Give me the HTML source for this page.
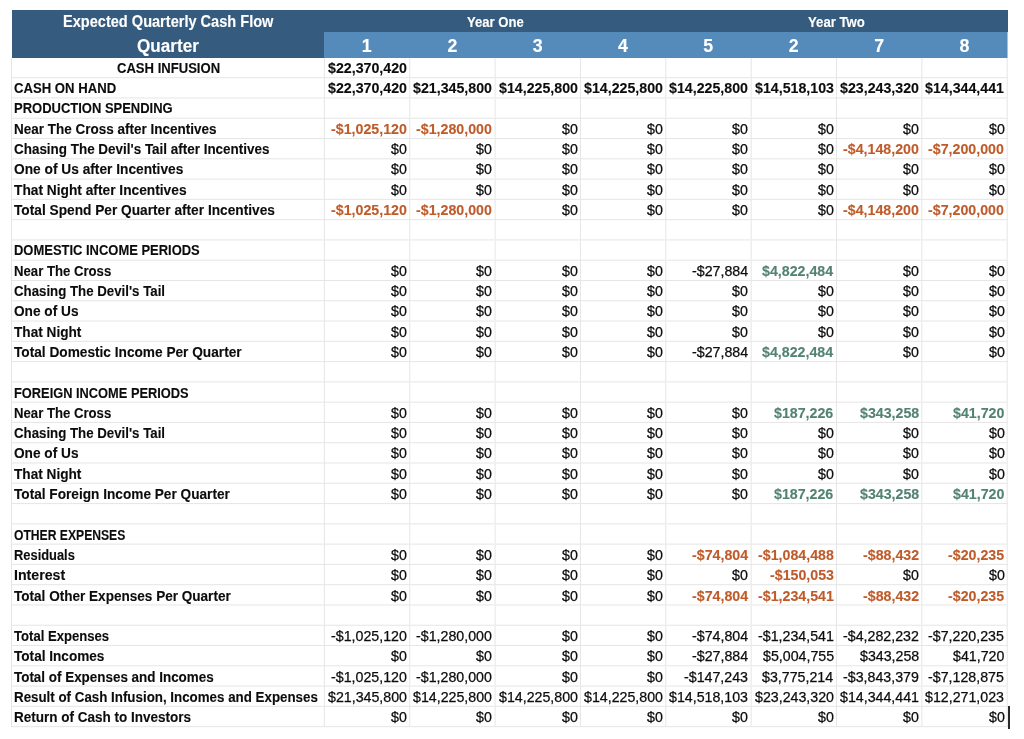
<!DOCTYPE html><html><head><meta charset="utf-8"><style>
html,body{margin:0;padding:0;background:#fff;width:1024px;height:739px;overflow:hidden;position:relative}
.t{position:absolute;font-family:"Liberation Sans",sans-serif;white-space:pre;line-height:40px;height:40px}
.g{position:absolute;mix-blend-mode:darken}
</style></head><body>

<div class="g" style="left:11px;top:77px;width:997px;height:1px;background:rgb(234,234,234)"></div>
<div class="g" style="left:11px;top:78px;width:997px;height:1px;background:rgb(250,250,250)"></div>
<div class="g" style="left:11px;top:97px;width:997px;height:1px;background:rgb(241,241,241)"></div>
<div class="g" style="left:11px;top:98px;width:997px;height:1px;background:rgb(243,243,243)"></div>
<div class="g" style="left:11px;top:117px;width:997px;height:1px;background:rgb(248,248,248)"></div>
<div class="g" style="left:11px;top:118px;width:997px;height:1px;background:rgb(236,236,236)"></div>
<div class="g" style="left:11px;top:138px;width:997px;height:1px;background:rgb(230,230,230)"></div>
<div class="g" style="left:11px;top:158px;width:997px;height:1px;background:rgb(237,237,237)"></div>
<div class="g" style="left:11px;top:159px;width:997px;height:1px;background:rgb(247,247,247)"></div>
<div class="g" style="left:11px;top:178px;width:997px;height:1px;background:rgb(244,244,244)"></div>
<div class="g" style="left:11px;top:179px;width:997px;height:1px;background:rgb(240,240,240)"></div>
<div class="g" style="left:11px;top:198px;width:997px;height:1px;background:rgb(251,251,251)"></div>
<div class="g" style="left:11px;top:199px;width:997px;height:1px;background:rgb(233,233,233)"></div>
<div class="g" style="left:11px;top:219px;width:997px;height:1px;background:rgb(233,233,233)"></div>
<div class="g" style="left:11px;top:220px;width:997px;height:1px;background:rgb(251,251,251)"></div>
<div class="g" style="left:11px;top:239px;width:997px;height:1px;background:rgb(240,240,240)"></div>
<div class="g" style="left:11px;top:240px;width:997px;height:1px;background:rgb(244,244,244)"></div>
<div class="g" style="left:11px;top:259px;width:997px;height:1px;background:rgb(247,247,247)"></div>
<div class="g" style="left:11px;top:260px;width:997px;height:1px;background:rgb(237,237,237)"></div>
<div class="g" style="left:11px;top:280px;width:997px;height:1px;background:rgb(230,230,230)"></div>
<div class="g" style="left:11px;top:300px;width:997px;height:1px;background:rgb(236,236,236)"></div>
<div class="g" style="left:11px;top:301px;width:997px;height:1px;background:rgb(248,248,248)"></div>
<div class="g" style="left:11px;top:320px;width:997px;height:1px;background:rgb(243,243,243)"></div>
<div class="g" style="left:11px;top:321px;width:997px;height:1px;background:rgb(241,241,241)"></div>
<div class="g" style="left:11px;top:340px;width:997px;height:1px;background:rgb(250,250,250)"></div>
<div class="g" style="left:11px;top:341px;width:997px;height:1px;background:rgb(234,234,234)"></div>
<div class="g" style="left:11px;top:361px;width:997px;height:1px;background:rgb(232,232,232)"></div>
<div class="g" style="left:11px;top:362px;width:997px;height:1px;background:rgb(252,252,252)"></div>
<div class="g" style="left:11px;top:381px;width:997px;height:1px;background:rgb(239,239,239)"></div>
<div class="g" style="left:11px;top:382px;width:997px;height:1px;background:rgb(245,245,245)"></div>
<div class="g" style="left:11px;top:401px;width:997px;height:1px;background:rgb(246,246,246)"></div>
<div class="g" style="left:11px;top:402px;width:997px;height:1px;background:rgb(238,238,238)"></div>
<div class="g" style="left:11px;top:421px;width:997px;height:1px;background:rgb(253,253,253)"></div>
<div class="g" style="left:11px;top:422px;width:997px;height:1px;background:rgb(231,231,231)"></div>
<div class="g" style="left:11px;top:442px;width:997px;height:1px;background:rgb(235,235,235)"></div>
<div class="g" style="left:11px;top:443px;width:997px;height:1px;background:rgb(249,249,249)"></div>
<div class="g" style="left:11px;top:462px;width:997px;height:1px;background:rgb(242,242,242)"></div>
<div class="g" style="left:11px;top:463px;width:997px;height:1px;background:rgb(242,242,242)"></div>
<div class="g" style="left:11px;top:482px;width:997px;height:1px;background:rgb(249,249,249)"></div>
<div class="g" style="left:11px;top:483px;width:997px;height:1px;background:rgb(235,235,235)"></div>
<div class="g" style="left:11px;top:503px;width:997px;height:1px;background:rgb(231,231,231)"></div>
<div class="g" style="left:11px;top:504px;width:997px;height:1px;background:rgb(253,253,253)"></div>
<div class="g" style="left:11px;top:523px;width:997px;height:1px;background:rgb(238,238,238)"></div>
<div class="g" style="left:11px;top:524px;width:997px;height:1px;background:rgb(246,246,246)"></div>
<div class="g" style="left:11px;top:543px;width:997px;height:1px;background:rgb(245,245,245)"></div>
<div class="g" style="left:11px;top:544px;width:997px;height:1px;background:rgb(239,239,239)"></div>
<div class="g" style="left:11px;top:563px;width:997px;height:1px;background:rgb(252,252,252)"></div>
<div class="g" style="left:11px;top:564px;width:997px;height:1px;background:rgb(232,232,232)"></div>
<div class="g" style="left:11px;top:584px;width:997px;height:1px;background:rgb(234,234,234)"></div>
<div class="g" style="left:11px;top:585px;width:997px;height:1px;background:rgb(250,250,250)"></div>
<div class="g" style="left:11px;top:604px;width:997px;height:1px;background:rgb(241,241,241)"></div>
<div class="g" style="left:11px;top:605px;width:997px;height:1px;background:rgb(243,243,243)"></div>
<div class="g" style="left:11px;top:624px;width:997px;height:1px;background:rgb(248,248,248)"></div>
<div class="g" style="left:11px;top:625px;width:997px;height:1px;background:rgb(236,236,236)"></div>
<div class="g" style="left:11px;top:645px;width:997px;height:1px;background:rgb(230,230,230)"></div>
<div class="g" style="left:11px;top:665px;width:997px;height:1px;background:rgb(237,237,237)"></div>
<div class="g" style="left:11px;top:666px;width:997px;height:1px;background:rgb(247,247,247)"></div>
<div class="g" style="left:11px;top:685px;width:997px;height:1px;background:rgb(244,244,244)"></div>
<div class="g" style="left:11px;top:686px;width:997px;height:1px;background:rgb(240,240,240)"></div>
<div class="g" style="left:11px;top:705px;width:997px;height:1px;background:rgb(251,251,251)"></div>
<div class="g" style="left:11px;top:706px;width:997px;height:1px;background:rgb(233,233,233)"></div>
<div class="g" style="left:11px;top:726px;width:997px;height:1px;background:rgb(233,233,233)"></div>
<div class="g" style="left:11px;top:727px;width:997px;height:1px;background:rgb(251,251,251)"></div>
<div class="g" style="left:11px;top:58px;width:1px;height:669px;background:rgb(230,230,230)"></div>
<div class="g" style="left:323px;top:58px;width:1px;height:669px;background:rgb(252,252,252)"></div>
<div class="g" style="left:324px;top:58px;width:1px;height:669px;background:rgb(232,232,232)"></div>
<div class="g" style="left:409px;top:58px;width:1px;height:669px;background:rgb(236,236,236)"></div>
<div class="g" style="left:410px;top:58px;width:1px;height:669px;background:rgb(249,249,249)"></div>
<div class="g" style="left:494px;top:58px;width:1px;height:669px;background:rgb(245,245,245)"></div>
<div class="g" style="left:495px;top:58px;width:1px;height:669px;background:rgb(240,240,240)"></div>
<div class="g" style="left:579px;top:58px;width:1px;height:669px;background:rgb(254,254,254)"></div>
<div class="g" style="left:580px;top:58px;width:1px;height:669px;background:rgb(231,231,231)"></div>
<div class="g" style="left:665px;top:58px;width:1px;height:669px;background:rgb(237,237,237)"></div>
<div class="g" style="left:666px;top:58px;width:1px;height:669px;background:rgb(247,247,247)"></div>
<div class="g" style="left:750px;top:58px;width:1px;height:669px;background:rgb(246,246,246)"></div>
<div class="g" style="left:751px;top:58px;width:1px;height:669px;background:rgb(238,238,238)"></div>
<div class="g" style="left:836px;top:58px;width:1px;height:669px;background:rgb(230,230,230)"></div>
<div class="g" style="left:921px;top:58px;width:1px;height:669px;background:rgb(238,238,238)"></div>
<div class="g" style="left:922px;top:58px;width:1px;height:669px;background:rgb(246,246,246)"></div>
<div class="g" style="left:1006px;top:58px;width:1px;height:669px;background:rgb(247,247,247)"></div>
<div class="g" style="left:1007px;top:58px;width:1px;height:669px;background:rgb(237,237,237)"></div>
<div style="position:absolute;left:12px;top:10px;width:996px;height:48px;background:#355C7F"></div>
<div style="position:absolute;left:324px;top:32px;width:684px;height:26px;background:#548BBA"></div>
<div style="position:absolute;left:1008px;top:706px;width:2px;height:23px;background:#2a2a2a"></div>
<div style="position:absolute;left:1007px;top:32px;width:1px;height:26px;background:#9cc3e3"></div>
<div class="t" style="left:116.51px;top:47.70px;font-weight:700;font-size:14px;color:#0c0c0c;transform:scaleX(0.9332);transform-origin:left center;-webkit-text-stroke:0.12px #0c0c0c">CASH INFUSION</div>
<div class="t" style="left:13.81px;top:68.00px;font-weight:700;font-size:14px;color:#0c0c0c;transform:scaleX(0.9378);transform-origin:left center;-webkit-text-stroke:0.12px #0c0c0c">CASH ON HAND</div>
<div class="t" style="left:14.01px;top:88.30px;font-weight:700;font-size:14px;color:#0c0c0c;transform:scaleX(0.9274);transform-origin:left center;-webkit-text-stroke:0.12px #0c0c0c">PRODUCTION SPENDING</div>
<div class="t" style="left:13.98px;top:108.60px;font-weight:700;font-size:14px;color:#0c0c0c;transform:scaleX(0.9638);transform-origin:left center;-webkit-text-stroke:0.12px #0c0c0c">Near The Cross after Incentives</div>
<div class="t" style="left:13.79px;top:128.90px;font-weight:700;font-size:14px;color:#0c0c0c;transform:scaleX(0.9599);transform-origin:left center;-webkit-text-stroke:0.12px #0c0c0c">Chasing The Devil&#x27;s Tail after Incentives</div>
<div class="t" style="left:13.73px;top:149.20px;font-weight:700;font-size:14px;color:#0c0c0c;transform:scaleX(0.9803);transform-origin:left center;-webkit-text-stroke:0.12px #0c0c0c">One of Us after Incentives</div>
<div class="t" style="left:14.16px;top:169.50px;font-weight:700;font-size:14px;color:#0c0c0c;transform:scaleX(0.9813);transform-origin:left center;-webkit-text-stroke:0.12px #0c0c0c">That Night after Incentives</div>
<div class="t" style="left:14.16px;top:189.80px;font-weight:700;font-size:14px;color:#0c0c0c;transform:scaleX(0.9786);transform-origin:left center;-webkit-text-stroke:0.12px #0c0c0c">Total Spend Per Quarter after Incentives</div>
<div class="t" style="left:14.01px;top:230.40px;font-weight:700;font-size:14px;color:#0c0c0c;transform:scaleX(0.9256);transform-origin:left center;-webkit-text-stroke:0.12px #0c0c0c">DOMESTIC INCOME PERIODS</div>
<div class="t" style="left:14.00px;top:250.70px;font-weight:700;font-size:14px;color:#0c0c0c;transform:scaleX(0.9395);transform-origin:left center;-webkit-text-stroke:0.12px #0c0c0c">Near The Cross</div>
<div class="t" style="left:13.80px;top:271.00px;font-weight:700;font-size:14px;color:#0c0c0c;transform:scaleX(0.9471);transform-origin:left center;-webkit-text-stroke:0.12px #0c0c0c">Chasing The Devil&#x27;s Tail</div>
<div class="t" style="left:13.73px;top:291.30px;font-weight:700;font-size:14px;color:#0c0c0c;transform:scaleX(0.9756);transform-origin:left center;-webkit-text-stroke:0.12px #0c0c0c">One of Us</div>
<div class="t" style="left:14.16px;top:311.60px;font-weight:700;font-size:14px;color:#0c0c0c;transform:scaleX(0.9739);transform-origin:left center;-webkit-text-stroke:0.12px #0c0c0c">That Night</div>
<div class="t" style="left:14.16px;top:331.90px;font-weight:700;font-size:14px;color:#0c0c0c;transform:scaleX(0.9763);transform-origin:left center;-webkit-text-stroke:0.12px #0c0c0c">Total Domestic Income Per Quarter</div>
<div class="t" style="left:14.02px;top:372.50px;font-weight:700;font-size:14px;color:#0c0c0c;transform:scaleX(0.9164);transform-origin:left center;-webkit-text-stroke:0.12px #0c0c0c">FOREIGN INCOME PERIODS</div>
<div class="t" style="left:14.00px;top:392.80px;font-weight:700;font-size:14px;color:#0c0c0c;transform:scaleX(0.9395);transform-origin:left center;-webkit-text-stroke:0.12px #0c0c0c">Near The Cross</div>
<div class="t" style="left:13.80px;top:413.10px;font-weight:700;font-size:14px;color:#0c0c0c;transform:scaleX(0.9471);transform-origin:left center;-webkit-text-stroke:0.12px #0c0c0c">Chasing The Devil&#x27;s Tail</div>
<div class="t" style="left:13.73px;top:433.40px;font-weight:700;font-size:14px;color:#0c0c0c;transform:scaleX(0.9756);transform-origin:left center;-webkit-text-stroke:0.12px #0c0c0c">One of Us</div>
<div class="t" style="left:14.16px;top:453.70px;font-weight:700;font-size:14px;color:#0c0c0c;transform:scaleX(0.9739);transform-origin:left center;-webkit-text-stroke:0.12px #0c0c0c">That Night</div>
<div class="t" style="left:14.16px;top:474.00px;font-weight:700;font-size:14px;color:#0c0c0c;transform:scaleX(0.9747);transform-origin:left center;-webkit-text-stroke:0.12px #0c0c0c">Total Foreign Income Per Quarter</div>
<div class="t" style="left:13.80px;top:514.60px;font-weight:700;font-size:14px;color:#0c0c0c;transform:scaleX(0.8671);transform-origin:left center;-webkit-text-stroke:0.12px #0c0c0c">OTHER EXPENSES</div>
<div class="t" style="left:14.02px;top:534.90px;font-weight:700;font-size:14px;color:#0c0c0c;transform:scaleX(0.9202);transform-origin:left center;-webkit-text-stroke:0.12px #0c0c0c">Residuals</div>
<div class="t" style="left:13.94px;top:555.20px;font-weight:700;font-size:14px;color:#0c0c0c;transform:scaleX(1.0115);transform-origin:left center;-webkit-text-stroke:0.12px #0c0c0c">Interest</div>
<div class="t" style="left:14.16px;top:575.50px;font-weight:700;font-size:14px;color:#0c0c0c;transform:scaleX(0.9683);transform-origin:left center;-webkit-text-stroke:0.12px #0c0c0c">Total Other Expenses Per Quarter</div>
<div class="t" style="left:14.16px;top:616.10px;font-weight:700;font-size:14px;color:#0c0c0c;transform:scaleX(0.9360);transform-origin:left center;-webkit-text-stroke:0.12px #0c0c0c">Total Expenses</div>
<div class="t" style="left:14.16px;top:636.40px;font-weight:700;font-size:14px;color:#0c0c0c;transform:scaleX(0.9711);transform-origin:left center;-webkit-text-stroke:0.12px #0c0c0c">Total Incomes</div>
<div class="t" style="left:14.16px;top:656.70px;font-weight:700;font-size:14px;color:#0c0c0c;transform:scaleX(0.9588);transform-origin:left center;-webkit-text-stroke:0.12px #0c0c0c">Total of Expenses and Incomes</div>
<div class="t" style="left:13.99px;top:677.00px;font-weight:700;font-size:14px;color:#0c0c0c;transform:scaleX(0.9526);transform-origin:left center;-webkit-text-stroke:0.12px #0c0c0c">Result of Cash Infusion, Incomes and Expenses</div>
<div class="t" style="left:13.98px;top:697.30px;font-weight:700;font-size:14px;color:#0c0c0c;transform:scaleX(0.9644);transform-origin:left center;-webkit-text-stroke:0.12px #0c0c0c">Return of Cash to Investors</div>
<div class="t" style="left:327.97px;top:47.70px;font-weight:700;font-size:14px;color:#0c0c0c;transform:scaleX(1.0150);transform-origin:left center;-webkit-text-stroke:0.12px #0c0c0c">$22,370,420</div>
<div class="t" style="left:327.97px;top:68.00px;font-weight:700;font-size:14px;color:#0c0c0c;transform:scaleX(1.0150);transform-origin:left center;-webkit-text-stroke:0.12px #0c0c0c">$22,370,420</div>
<div class="t" style="left:413.32px;top:68.00px;font-weight:700;font-size:14px;color:#0c0c0c;transform:scaleX(1.0150);transform-origin:left center;-webkit-text-stroke:0.12px #0c0c0c">$21,345,800</div>
<div class="t" style="left:498.67px;top:68.00px;font-weight:700;font-size:14px;color:#0c0c0c;transform:scaleX(1.0150);transform-origin:left center;-webkit-text-stroke:0.12px #0c0c0c">$14,225,800</div>
<div class="t" style="left:584.02px;top:68.00px;font-weight:700;font-size:14px;color:#0c0c0c;transform:scaleX(1.0150);transform-origin:left center;-webkit-text-stroke:0.12px #0c0c0c">$14,225,800</div>
<div class="t" style="left:669.37px;top:68.00px;font-weight:700;font-size:14px;color:#0c0c0c;transform:scaleX(1.0150);transform-origin:left center;-webkit-text-stroke:0.12px #0c0c0c">$14,225,800</div>
<div class="t" style="left:754.71px;top:68.00px;font-weight:700;font-size:14px;color:#0c0c0c;transform:scaleX(1.0150);transform-origin:left center;-webkit-text-stroke:0.12px #0c0c0c">$14,518,103</div>
<div class="t" style="left:840.07px;top:68.00px;font-weight:700;font-size:14px;color:#0c0c0c;transform:scaleX(1.0150);transform-origin:left center;-webkit-text-stroke:0.12px #0c0c0c">$23,243,320</div>
<div class="t" style="left:925.26px;top:68.00px;font-weight:700;font-size:14px;color:#0c0c0c;transform:scaleX(1.0150);transform-origin:left center;-webkit-text-stroke:0.12px #0c0c0c">$14,344,441</div>
<div class="t" style="left:331.01px;top:108.60px;font-weight:700;font-size:14px;color:#BF5B2A;transform:scaleX(1.0150);transform-origin:left center;-webkit-text-stroke:0.12px #BF5B2A">-$1,025,120</div>
<div class="t" style="left:416.36px;top:108.60px;font-weight:700;font-size:14px;color:#BF5B2A;transform:scaleX(1.0150);transform-origin:left center;-webkit-text-stroke:0.12px #BF5B2A">-$1,280,000</div>
<div class="t" style="left:561.77px;top:108.60px;font-weight:400;font-size:14px;color:#0c0c0c;transform:scaleX(1.0150);transform-origin:left center;-webkit-text-stroke:0.25px #0c0c0c">$0</div>
<div class="t" style="left:647.12px;top:108.60px;font-weight:400;font-size:14px;color:#0c0c0c;transform:scaleX(1.0150);transform-origin:left center;-webkit-text-stroke:0.25px #0c0c0c">$0</div>
<div class="t" style="left:732.47px;top:108.60px;font-weight:400;font-size:14px;color:#0c0c0c;transform:scaleX(1.0150);transform-origin:left center;-webkit-text-stroke:0.25px #0c0c0c">$0</div>
<div class="t" style="left:817.82px;top:108.60px;font-weight:400;font-size:14px;color:#0c0c0c;transform:scaleX(1.0150);transform-origin:left center;-webkit-text-stroke:0.25px #0c0c0c">$0</div>
<div class="t" style="left:903.17px;top:108.60px;font-weight:400;font-size:14px;color:#0c0c0c;transform:scaleX(1.0150);transform-origin:left center;-webkit-text-stroke:0.25px #0c0c0c">$0</div>
<div class="t" style="left:988.52px;top:108.60px;font-weight:400;font-size:14px;color:#0c0c0c;transform:scaleX(1.0150);transform-origin:left center;-webkit-text-stroke:0.25px #0c0c0c">$0</div>
<div class="t" style="left:391.07px;top:128.90px;font-weight:400;font-size:14px;color:#0c0c0c;transform:scaleX(1.0150);transform-origin:left center;-webkit-text-stroke:0.25px #0c0c0c">$0</div>
<div class="t" style="left:476.42px;top:128.90px;font-weight:400;font-size:14px;color:#0c0c0c;transform:scaleX(1.0150);transform-origin:left center;-webkit-text-stroke:0.25px #0c0c0c">$0</div>
<div class="t" style="left:561.77px;top:128.90px;font-weight:400;font-size:14px;color:#0c0c0c;transform:scaleX(1.0150);transform-origin:left center;-webkit-text-stroke:0.25px #0c0c0c">$0</div>
<div class="t" style="left:647.12px;top:128.90px;font-weight:400;font-size:14px;color:#0c0c0c;transform:scaleX(1.0150);transform-origin:left center;-webkit-text-stroke:0.25px #0c0c0c">$0</div>
<div class="t" style="left:732.47px;top:128.90px;font-weight:400;font-size:14px;color:#0c0c0c;transform:scaleX(1.0150);transform-origin:left center;-webkit-text-stroke:0.25px #0c0c0c">$0</div>
<div class="t" style="left:817.82px;top:128.90px;font-weight:400;font-size:14px;color:#0c0c0c;transform:scaleX(1.0150);transform-origin:left center;-webkit-text-stroke:0.25px #0c0c0c">$0</div>
<div class="t" style="left:843.11px;top:128.90px;font-weight:700;font-size:14px;color:#BF5B2A;transform:scaleX(1.0150);transform-origin:left center;-webkit-text-stroke:0.12px #BF5B2A">-$4,148,200</div>
<div class="t" style="left:928.46px;top:128.90px;font-weight:700;font-size:14px;color:#BF5B2A;transform:scaleX(1.0150);transform-origin:left center;-webkit-text-stroke:0.12px #BF5B2A">-$7,200,000</div>
<div class="t" style="left:391.07px;top:149.20px;font-weight:400;font-size:14px;color:#0c0c0c;transform:scaleX(1.0150);transform-origin:left center;-webkit-text-stroke:0.25px #0c0c0c">$0</div>
<div class="t" style="left:476.42px;top:149.20px;font-weight:400;font-size:14px;color:#0c0c0c;transform:scaleX(1.0150);transform-origin:left center;-webkit-text-stroke:0.25px #0c0c0c">$0</div>
<div class="t" style="left:561.77px;top:149.20px;font-weight:400;font-size:14px;color:#0c0c0c;transform:scaleX(1.0150);transform-origin:left center;-webkit-text-stroke:0.25px #0c0c0c">$0</div>
<div class="t" style="left:647.12px;top:149.20px;font-weight:400;font-size:14px;color:#0c0c0c;transform:scaleX(1.0150);transform-origin:left center;-webkit-text-stroke:0.25px #0c0c0c">$0</div>
<div class="t" style="left:732.47px;top:149.20px;font-weight:400;font-size:14px;color:#0c0c0c;transform:scaleX(1.0150);transform-origin:left center;-webkit-text-stroke:0.25px #0c0c0c">$0</div>
<div class="t" style="left:817.82px;top:149.20px;font-weight:400;font-size:14px;color:#0c0c0c;transform:scaleX(1.0150);transform-origin:left center;-webkit-text-stroke:0.25px #0c0c0c">$0</div>
<div class="t" style="left:903.17px;top:149.20px;font-weight:400;font-size:14px;color:#0c0c0c;transform:scaleX(1.0150);transform-origin:left center;-webkit-text-stroke:0.25px #0c0c0c">$0</div>
<div class="t" style="left:988.52px;top:149.20px;font-weight:400;font-size:14px;color:#0c0c0c;transform:scaleX(1.0150);transform-origin:left center;-webkit-text-stroke:0.25px #0c0c0c">$0</div>
<div class="t" style="left:391.07px;top:169.50px;font-weight:400;font-size:14px;color:#0c0c0c;transform:scaleX(1.0150);transform-origin:left center;-webkit-text-stroke:0.25px #0c0c0c">$0</div>
<div class="t" style="left:476.42px;top:169.50px;font-weight:400;font-size:14px;color:#0c0c0c;transform:scaleX(1.0150);transform-origin:left center;-webkit-text-stroke:0.25px #0c0c0c">$0</div>
<div class="t" style="left:561.77px;top:169.50px;font-weight:400;font-size:14px;color:#0c0c0c;transform:scaleX(1.0150);transform-origin:left center;-webkit-text-stroke:0.25px #0c0c0c">$0</div>
<div class="t" style="left:647.12px;top:169.50px;font-weight:400;font-size:14px;color:#0c0c0c;transform:scaleX(1.0150);transform-origin:left center;-webkit-text-stroke:0.25px #0c0c0c">$0</div>
<div class="t" style="left:732.47px;top:169.50px;font-weight:400;font-size:14px;color:#0c0c0c;transform:scaleX(1.0150);transform-origin:left center;-webkit-text-stroke:0.25px #0c0c0c">$0</div>
<div class="t" style="left:817.82px;top:169.50px;font-weight:400;font-size:14px;color:#0c0c0c;transform:scaleX(1.0150);transform-origin:left center;-webkit-text-stroke:0.25px #0c0c0c">$0</div>
<div class="t" style="left:903.17px;top:169.50px;font-weight:400;font-size:14px;color:#0c0c0c;transform:scaleX(1.0150);transform-origin:left center;-webkit-text-stroke:0.25px #0c0c0c">$0</div>
<div class="t" style="left:988.52px;top:169.50px;font-weight:400;font-size:14px;color:#0c0c0c;transform:scaleX(1.0150);transform-origin:left center;-webkit-text-stroke:0.25px #0c0c0c">$0</div>
<div class="t" style="left:331.01px;top:189.80px;font-weight:700;font-size:14px;color:#BF5B2A;transform:scaleX(1.0150);transform-origin:left center;-webkit-text-stroke:0.12px #BF5B2A">-$1,025,120</div>
<div class="t" style="left:416.36px;top:189.80px;font-weight:700;font-size:14px;color:#BF5B2A;transform:scaleX(1.0150);transform-origin:left center;-webkit-text-stroke:0.12px #BF5B2A">-$1,280,000</div>
<div class="t" style="left:561.77px;top:189.80px;font-weight:400;font-size:14px;color:#0c0c0c;transform:scaleX(1.0150);transform-origin:left center;-webkit-text-stroke:0.25px #0c0c0c">$0</div>
<div class="t" style="left:647.12px;top:189.80px;font-weight:400;font-size:14px;color:#0c0c0c;transform:scaleX(1.0150);transform-origin:left center;-webkit-text-stroke:0.25px #0c0c0c">$0</div>
<div class="t" style="left:732.47px;top:189.80px;font-weight:400;font-size:14px;color:#0c0c0c;transform:scaleX(1.0150);transform-origin:left center;-webkit-text-stroke:0.25px #0c0c0c">$0</div>
<div class="t" style="left:817.82px;top:189.80px;font-weight:400;font-size:14px;color:#0c0c0c;transform:scaleX(1.0150);transform-origin:left center;-webkit-text-stroke:0.25px #0c0c0c">$0</div>
<div class="t" style="left:843.11px;top:189.80px;font-weight:700;font-size:14px;color:#BF5B2A;transform:scaleX(1.0150);transform-origin:left center;-webkit-text-stroke:0.12px #BF5B2A">-$4,148,200</div>
<div class="t" style="left:928.46px;top:189.80px;font-weight:700;font-size:14px;color:#BF5B2A;transform:scaleX(1.0150);transform-origin:left center;-webkit-text-stroke:0.12px #BF5B2A">-$7,200,000</div>
<div class="t" style="left:391.07px;top:250.70px;font-weight:400;font-size:14px;color:#0c0c0c;transform:scaleX(1.0150);transform-origin:left center;-webkit-text-stroke:0.25px #0c0c0c">$0</div>
<div class="t" style="left:476.42px;top:250.70px;font-weight:400;font-size:14px;color:#0c0c0c;transform:scaleX(1.0150);transform-origin:left center;-webkit-text-stroke:0.25px #0c0c0c">$0</div>
<div class="t" style="left:561.77px;top:250.70px;font-weight:400;font-size:14px;color:#0c0c0c;transform:scaleX(1.0150);transform-origin:left center;-webkit-text-stroke:0.25px #0c0c0c">$0</div>
<div class="t" style="left:647.12px;top:250.70px;font-weight:400;font-size:14px;color:#0c0c0c;transform:scaleX(1.0150);transform-origin:left center;-webkit-text-stroke:0.25px #0c0c0c">$0</div>
<div class="t" style="left:691.91px;top:250.70px;font-weight:400;font-size:14px;color:#0c0c0c;transform:scaleX(1.0150);transform-origin:left center;-webkit-text-stroke:0.25px #0c0c0c">-$27,884</div>
<div class="t" style="left:762.00px;top:250.70px;font-weight:700;font-size:14px;color:#528272;transform:scaleX(1.0150);transform-origin:left center;-webkit-text-stroke:0.12px #528272">$4,822,484</div>
<div class="t" style="left:903.17px;top:250.70px;font-weight:400;font-size:14px;color:#0c0c0c;transform:scaleX(1.0150);transform-origin:left center;-webkit-text-stroke:0.25px #0c0c0c">$0</div>
<div class="t" style="left:988.52px;top:250.70px;font-weight:400;font-size:14px;color:#0c0c0c;transform:scaleX(1.0150);transform-origin:left center;-webkit-text-stroke:0.25px #0c0c0c">$0</div>
<div class="t" style="left:391.07px;top:271.00px;font-weight:400;font-size:14px;color:#0c0c0c;transform:scaleX(1.0150);transform-origin:left center;-webkit-text-stroke:0.25px #0c0c0c">$0</div>
<div class="t" style="left:476.42px;top:271.00px;font-weight:400;font-size:14px;color:#0c0c0c;transform:scaleX(1.0150);transform-origin:left center;-webkit-text-stroke:0.25px #0c0c0c">$0</div>
<div class="t" style="left:561.77px;top:271.00px;font-weight:400;font-size:14px;color:#0c0c0c;transform:scaleX(1.0150);transform-origin:left center;-webkit-text-stroke:0.25px #0c0c0c">$0</div>
<div class="t" style="left:647.12px;top:271.00px;font-weight:400;font-size:14px;color:#0c0c0c;transform:scaleX(1.0150);transform-origin:left center;-webkit-text-stroke:0.25px #0c0c0c">$0</div>
<div class="t" style="left:732.47px;top:271.00px;font-weight:400;font-size:14px;color:#0c0c0c;transform:scaleX(1.0150);transform-origin:left center;-webkit-text-stroke:0.25px #0c0c0c">$0</div>
<div class="t" style="left:817.82px;top:271.00px;font-weight:400;font-size:14px;color:#0c0c0c;transform:scaleX(1.0150);transform-origin:left center;-webkit-text-stroke:0.25px #0c0c0c">$0</div>
<div class="t" style="left:903.17px;top:271.00px;font-weight:400;font-size:14px;color:#0c0c0c;transform:scaleX(1.0150);transform-origin:left center;-webkit-text-stroke:0.25px #0c0c0c">$0</div>
<div class="t" style="left:988.52px;top:271.00px;font-weight:400;font-size:14px;color:#0c0c0c;transform:scaleX(1.0150);transform-origin:left center;-webkit-text-stroke:0.25px #0c0c0c">$0</div>
<div class="t" style="left:391.07px;top:291.30px;font-weight:400;font-size:14px;color:#0c0c0c;transform:scaleX(1.0150);transform-origin:left center;-webkit-text-stroke:0.25px #0c0c0c">$0</div>
<div class="t" style="left:476.42px;top:291.30px;font-weight:400;font-size:14px;color:#0c0c0c;transform:scaleX(1.0150);transform-origin:left center;-webkit-text-stroke:0.25px #0c0c0c">$0</div>
<div class="t" style="left:561.77px;top:291.30px;font-weight:400;font-size:14px;color:#0c0c0c;transform:scaleX(1.0150);transform-origin:left center;-webkit-text-stroke:0.25px #0c0c0c">$0</div>
<div class="t" style="left:647.12px;top:291.30px;font-weight:400;font-size:14px;color:#0c0c0c;transform:scaleX(1.0150);transform-origin:left center;-webkit-text-stroke:0.25px #0c0c0c">$0</div>
<div class="t" style="left:732.47px;top:291.30px;font-weight:400;font-size:14px;color:#0c0c0c;transform:scaleX(1.0150);transform-origin:left center;-webkit-text-stroke:0.25px #0c0c0c">$0</div>
<div class="t" style="left:817.82px;top:291.30px;font-weight:400;font-size:14px;color:#0c0c0c;transform:scaleX(1.0150);transform-origin:left center;-webkit-text-stroke:0.25px #0c0c0c">$0</div>
<div class="t" style="left:903.17px;top:291.30px;font-weight:400;font-size:14px;color:#0c0c0c;transform:scaleX(1.0150);transform-origin:left center;-webkit-text-stroke:0.25px #0c0c0c">$0</div>
<div class="t" style="left:988.52px;top:291.30px;font-weight:400;font-size:14px;color:#0c0c0c;transform:scaleX(1.0150);transform-origin:left center;-webkit-text-stroke:0.25px #0c0c0c">$0</div>
<div class="t" style="left:391.07px;top:311.60px;font-weight:400;font-size:14px;color:#0c0c0c;transform:scaleX(1.0150);transform-origin:left center;-webkit-text-stroke:0.25px #0c0c0c">$0</div>
<div class="t" style="left:476.42px;top:311.60px;font-weight:400;font-size:14px;color:#0c0c0c;transform:scaleX(1.0150);transform-origin:left center;-webkit-text-stroke:0.25px #0c0c0c">$0</div>
<div class="t" style="left:561.77px;top:311.60px;font-weight:400;font-size:14px;color:#0c0c0c;transform:scaleX(1.0150);transform-origin:left center;-webkit-text-stroke:0.25px #0c0c0c">$0</div>
<div class="t" style="left:647.12px;top:311.60px;font-weight:400;font-size:14px;color:#0c0c0c;transform:scaleX(1.0150);transform-origin:left center;-webkit-text-stroke:0.25px #0c0c0c">$0</div>
<div class="t" style="left:732.47px;top:311.60px;font-weight:400;font-size:14px;color:#0c0c0c;transform:scaleX(1.0150);transform-origin:left center;-webkit-text-stroke:0.25px #0c0c0c">$0</div>
<div class="t" style="left:817.82px;top:311.60px;font-weight:400;font-size:14px;color:#0c0c0c;transform:scaleX(1.0150);transform-origin:left center;-webkit-text-stroke:0.25px #0c0c0c">$0</div>
<div class="t" style="left:903.17px;top:311.60px;font-weight:400;font-size:14px;color:#0c0c0c;transform:scaleX(1.0150);transform-origin:left center;-webkit-text-stroke:0.25px #0c0c0c">$0</div>
<div class="t" style="left:988.52px;top:311.60px;font-weight:400;font-size:14px;color:#0c0c0c;transform:scaleX(1.0150);transform-origin:left center;-webkit-text-stroke:0.25px #0c0c0c">$0</div>
<div class="t" style="left:391.07px;top:331.90px;font-weight:400;font-size:14px;color:#0c0c0c;transform:scaleX(1.0150);transform-origin:left center;-webkit-text-stroke:0.25px #0c0c0c">$0</div>
<div class="t" style="left:476.42px;top:331.90px;font-weight:400;font-size:14px;color:#0c0c0c;transform:scaleX(1.0150);transform-origin:left center;-webkit-text-stroke:0.25px #0c0c0c">$0</div>
<div class="t" style="left:561.77px;top:331.90px;font-weight:400;font-size:14px;color:#0c0c0c;transform:scaleX(1.0150);transform-origin:left center;-webkit-text-stroke:0.25px #0c0c0c">$0</div>
<div class="t" style="left:647.12px;top:331.90px;font-weight:400;font-size:14px;color:#0c0c0c;transform:scaleX(1.0150);transform-origin:left center;-webkit-text-stroke:0.25px #0c0c0c">$0</div>
<div class="t" style="left:691.91px;top:331.90px;font-weight:400;font-size:14px;color:#0c0c0c;transform:scaleX(1.0150);transform-origin:left center;-webkit-text-stroke:0.25px #0c0c0c">-$27,884</div>
<div class="t" style="left:762.00px;top:331.90px;font-weight:700;font-size:14px;color:#528272;transform:scaleX(1.0150);transform-origin:left center;-webkit-text-stroke:0.12px #528272">$4,822,484</div>
<div class="t" style="left:903.17px;top:331.90px;font-weight:400;font-size:14px;color:#0c0c0c;transform:scaleX(1.0150);transform-origin:left center;-webkit-text-stroke:0.25px #0c0c0c">$0</div>
<div class="t" style="left:988.52px;top:331.90px;font-weight:400;font-size:14px;color:#0c0c0c;transform:scaleX(1.0150);transform-origin:left center;-webkit-text-stroke:0.25px #0c0c0c">$0</div>
<div class="t" style="left:391.07px;top:392.80px;font-weight:400;font-size:14px;color:#0c0c0c;transform:scaleX(1.0150);transform-origin:left center;-webkit-text-stroke:0.25px #0c0c0c">$0</div>
<div class="t" style="left:476.42px;top:392.80px;font-weight:400;font-size:14px;color:#0c0c0c;transform:scaleX(1.0150);transform-origin:left center;-webkit-text-stroke:0.25px #0c0c0c">$0</div>
<div class="t" style="left:561.77px;top:392.80px;font-weight:400;font-size:14px;color:#0c0c0c;transform:scaleX(1.0150);transform-origin:left center;-webkit-text-stroke:0.25px #0c0c0c">$0</div>
<div class="t" style="left:647.12px;top:392.80px;font-weight:400;font-size:14px;color:#0c0c0c;transform:scaleX(1.0150);transform-origin:left center;-webkit-text-stroke:0.25px #0c0c0c">$0</div>
<div class="t" style="left:732.47px;top:392.80px;font-weight:400;font-size:14px;color:#0c0c0c;transform:scaleX(1.0150);transform-origin:left center;-webkit-text-stroke:0.25px #0c0c0c">$0</div>
<div class="t" style="left:774.26px;top:392.80px;font-weight:700;font-size:14px;color:#528272;transform:scaleX(1.0150);transform-origin:left center;-webkit-text-stroke:0.12px #528272">$187,226</div>
<div class="t" style="left:859.60px;top:392.80px;font-weight:700;font-size:14px;color:#528272;transform:scaleX(1.0150);transform-origin:left center;-webkit-text-stroke:0.12px #528272">$343,258</div>
<div class="t" style="left:953.00px;top:392.80px;font-weight:700;font-size:14px;color:#528272;transform:scaleX(1.0150);transform-origin:left center;-webkit-text-stroke:0.12px #528272">$41,720</div>
<div class="t" style="left:391.07px;top:413.10px;font-weight:400;font-size:14px;color:#0c0c0c;transform:scaleX(1.0150);transform-origin:left center;-webkit-text-stroke:0.25px #0c0c0c">$0</div>
<div class="t" style="left:476.42px;top:413.10px;font-weight:400;font-size:14px;color:#0c0c0c;transform:scaleX(1.0150);transform-origin:left center;-webkit-text-stroke:0.25px #0c0c0c">$0</div>
<div class="t" style="left:561.77px;top:413.10px;font-weight:400;font-size:14px;color:#0c0c0c;transform:scaleX(1.0150);transform-origin:left center;-webkit-text-stroke:0.25px #0c0c0c">$0</div>
<div class="t" style="left:647.12px;top:413.10px;font-weight:400;font-size:14px;color:#0c0c0c;transform:scaleX(1.0150);transform-origin:left center;-webkit-text-stroke:0.25px #0c0c0c">$0</div>
<div class="t" style="left:732.47px;top:413.10px;font-weight:400;font-size:14px;color:#0c0c0c;transform:scaleX(1.0150);transform-origin:left center;-webkit-text-stroke:0.25px #0c0c0c">$0</div>
<div class="t" style="left:817.82px;top:413.10px;font-weight:400;font-size:14px;color:#0c0c0c;transform:scaleX(1.0150);transform-origin:left center;-webkit-text-stroke:0.25px #0c0c0c">$0</div>
<div class="t" style="left:903.17px;top:413.10px;font-weight:400;font-size:14px;color:#0c0c0c;transform:scaleX(1.0150);transform-origin:left center;-webkit-text-stroke:0.25px #0c0c0c">$0</div>
<div class="t" style="left:988.52px;top:413.10px;font-weight:400;font-size:14px;color:#0c0c0c;transform:scaleX(1.0150);transform-origin:left center;-webkit-text-stroke:0.25px #0c0c0c">$0</div>
<div class="t" style="left:391.07px;top:433.40px;font-weight:400;font-size:14px;color:#0c0c0c;transform:scaleX(1.0150);transform-origin:left center;-webkit-text-stroke:0.25px #0c0c0c">$0</div>
<div class="t" style="left:476.42px;top:433.40px;font-weight:400;font-size:14px;color:#0c0c0c;transform:scaleX(1.0150);transform-origin:left center;-webkit-text-stroke:0.25px #0c0c0c">$0</div>
<div class="t" style="left:561.77px;top:433.40px;font-weight:400;font-size:14px;color:#0c0c0c;transform:scaleX(1.0150);transform-origin:left center;-webkit-text-stroke:0.25px #0c0c0c">$0</div>
<div class="t" style="left:647.12px;top:433.40px;font-weight:400;font-size:14px;color:#0c0c0c;transform:scaleX(1.0150);transform-origin:left center;-webkit-text-stroke:0.25px #0c0c0c">$0</div>
<div class="t" style="left:732.47px;top:433.40px;font-weight:400;font-size:14px;color:#0c0c0c;transform:scaleX(1.0150);transform-origin:left center;-webkit-text-stroke:0.25px #0c0c0c">$0</div>
<div class="t" style="left:817.82px;top:433.40px;font-weight:400;font-size:14px;color:#0c0c0c;transform:scaleX(1.0150);transform-origin:left center;-webkit-text-stroke:0.25px #0c0c0c">$0</div>
<div class="t" style="left:903.17px;top:433.40px;font-weight:400;font-size:14px;color:#0c0c0c;transform:scaleX(1.0150);transform-origin:left center;-webkit-text-stroke:0.25px #0c0c0c">$0</div>
<div class="t" style="left:988.52px;top:433.40px;font-weight:400;font-size:14px;color:#0c0c0c;transform:scaleX(1.0150);transform-origin:left center;-webkit-text-stroke:0.25px #0c0c0c">$0</div>
<div class="t" style="left:391.07px;top:453.70px;font-weight:400;font-size:14px;color:#0c0c0c;transform:scaleX(1.0150);transform-origin:left center;-webkit-text-stroke:0.25px #0c0c0c">$0</div>
<div class="t" style="left:476.42px;top:453.70px;font-weight:400;font-size:14px;color:#0c0c0c;transform:scaleX(1.0150);transform-origin:left center;-webkit-text-stroke:0.25px #0c0c0c">$0</div>
<div class="t" style="left:561.77px;top:453.70px;font-weight:400;font-size:14px;color:#0c0c0c;transform:scaleX(1.0150);transform-origin:left center;-webkit-text-stroke:0.25px #0c0c0c">$0</div>
<div class="t" style="left:647.12px;top:453.70px;font-weight:400;font-size:14px;color:#0c0c0c;transform:scaleX(1.0150);transform-origin:left center;-webkit-text-stroke:0.25px #0c0c0c">$0</div>
<div class="t" style="left:732.47px;top:453.70px;font-weight:400;font-size:14px;color:#0c0c0c;transform:scaleX(1.0150);transform-origin:left center;-webkit-text-stroke:0.25px #0c0c0c">$0</div>
<div class="t" style="left:817.82px;top:453.70px;font-weight:400;font-size:14px;color:#0c0c0c;transform:scaleX(1.0150);transform-origin:left center;-webkit-text-stroke:0.25px #0c0c0c">$0</div>
<div class="t" style="left:903.17px;top:453.70px;font-weight:400;font-size:14px;color:#0c0c0c;transform:scaleX(1.0150);transform-origin:left center;-webkit-text-stroke:0.25px #0c0c0c">$0</div>
<div class="t" style="left:988.52px;top:453.70px;font-weight:400;font-size:14px;color:#0c0c0c;transform:scaleX(1.0150);transform-origin:left center;-webkit-text-stroke:0.25px #0c0c0c">$0</div>
<div class="t" style="left:391.07px;top:474.00px;font-weight:400;font-size:14px;color:#0c0c0c;transform:scaleX(1.0150);transform-origin:left center;-webkit-text-stroke:0.25px #0c0c0c">$0</div>
<div class="t" style="left:476.42px;top:474.00px;font-weight:400;font-size:14px;color:#0c0c0c;transform:scaleX(1.0150);transform-origin:left center;-webkit-text-stroke:0.25px #0c0c0c">$0</div>
<div class="t" style="left:561.77px;top:474.00px;font-weight:400;font-size:14px;color:#0c0c0c;transform:scaleX(1.0150);transform-origin:left center;-webkit-text-stroke:0.25px #0c0c0c">$0</div>
<div class="t" style="left:647.12px;top:474.00px;font-weight:400;font-size:14px;color:#0c0c0c;transform:scaleX(1.0150);transform-origin:left center;-webkit-text-stroke:0.25px #0c0c0c">$0</div>
<div class="t" style="left:732.47px;top:474.00px;font-weight:400;font-size:14px;color:#0c0c0c;transform:scaleX(1.0150);transform-origin:left center;-webkit-text-stroke:0.25px #0c0c0c">$0</div>
<div class="t" style="left:774.26px;top:474.00px;font-weight:700;font-size:14px;color:#528272;transform:scaleX(1.0150);transform-origin:left center;-webkit-text-stroke:0.12px #528272">$187,226</div>
<div class="t" style="left:859.60px;top:474.00px;font-weight:700;font-size:14px;color:#528272;transform:scaleX(1.0150);transform-origin:left center;-webkit-text-stroke:0.12px #528272">$343,258</div>
<div class="t" style="left:953.00px;top:474.00px;font-weight:700;font-size:14px;color:#528272;transform:scaleX(1.0150);transform-origin:left center;-webkit-text-stroke:0.12px #528272">$41,720</div>
<div class="t" style="left:391.07px;top:534.90px;font-weight:400;font-size:14px;color:#0c0c0c;transform:scaleX(1.0150);transform-origin:left center;-webkit-text-stroke:0.25px #0c0c0c">$0</div>
<div class="t" style="left:476.42px;top:534.90px;font-weight:400;font-size:14px;color:#0c0c0c;transform:scaleX(1.0150);transform-origin:left center;-webkit-text-stroke:0.25px #0c0c0c">$0</div>
<div class="t" style="left:561.77px;top:534.90px;font-weight:400;font-size:14px;color:#0c0c0c;transform:scaleX(1.0150);transform-origin:left center;-webkit-text-stroke:0.25px #0c0c0c">$0</div>
<div class="t" style="left:647.12px;top:534.90px;font-weight:400;font-size:14px;color:#0c0c0c;transform:scaleX(1.0150);transform-origin:left center;-webkit-text-stroke:0.25px #0c0c0c">$0</div>
<div class="t" style="left:691.69px;top:534.90px;font-weight:700;font-size:14px;color:#BF5B2A;transform:scaleX(1.0150);transform-origin:left center;-webkit-text-stroke:0.12px #BF5B2A">-$74,804</div>
<div class="t" style="left:757.67px;top:534.90px;font-weight:700;font-size:14px;color:#BF5B2A;transform:scaleX(1.0150);transform-origin:left center;-webkit-text-stroke:0.12px #BF5B2A">-$1,084,488</div>
<div class="t" style="left:862.97px;top:534.90px;font-weight:700;font-size:14px;color:#BF5B2A;transform:scaleX(1.0150);transform-origin:left center;-webkit-text-stroke:0.12px #BF5B2A">-$88,432</div>
<div class="t" style="left:947.96px;top:534.90px;font-weight:700;font-size:14px;color:#BF5B2A;transform:scaleX(1.0150);transform-origin:left center;-webkit-text-stroke:0.12px #BF5B2A">-$20,235</div>
<div class="t" style="left:391.07px;top:555.20px;font-weight:400;font-size:14px;color:#0c0c0c;transform:scaleX(1.0150);transform-origin:left center;-webkit-text-stroke:0.25px #0c0c0c">$0</div>
<div class="t" style="left:476.42px;top:555.20px;font-weight:400;font-size:14px;color:#0c0c0c;transform:scaleX(1.0150);transform-origin:left center;-webkit-text-stroke:0.25px #0c0c0c">$0</div>
<div class="t" style="left:561.77px;top:555.20px;font-weight:400;font-size:14px;color:#0c0c0c;transform:scaleX(1.0150);transform-origin:left center;-webkit-text-stroke:0.25px #0c0c0c">$0</div>
<div class="t" style="left:647.12px;top:555.20px;font-weight:400;font-size:14px;color:#0c0c0c;transform:scaleX(1.0150);transform-origin:left center;-webkit-text-stroke:0.25px #0c0c0c">$0</div>
<div class="t" style="left:732.47px;top:555.20px;font-weight:400;font-size:14px;color:#0c0c0c;transform:scaleX(1.0150);transform-origin:left center;-webkit-text-stroke:0.25px #0c0c0c">$0</div>
<div class="t" style="left:769.68px;top:555.20px;font-weight:700;font-size:14px;color:#BF5B2A;transform:scaleX(1.0150);transform-origin:left center;-webkit-text-stroke:0.12px #BF5B2A">-$150,053</div>
<div class="t" style="left:903.17px;top:555.20px;font-weight:400;font-size:14px;color:#0c0c0c;transform:scaleX(1.0150);transform-origin:left center;-webkit-text-stroke:0.25px #0c0c0c">$0</div>
<div class="t" style="left:988.52px;top:555.20px;font-weight:400;font-size:14px;color:#0c0c0c;transform:scaleX(1.0150);transform-origin:left center;-webkit-text-stroke:0.25px #0c0c0c">$0</div>
<div class="t" style="left:391.07px;top:575.50px;font-weight:400;font-size:14px;color:#0c0c0c;transform:scaleX(1.0150);transform-origin:left center;-webkit-text-stroke:0.25px #0c0c0c">$0</div>
<div class="t" style="left:476.42px;top:575.50px;font-weight:400;font-size:14px;color:#0c0c0c;transform:scaleX(1.0150);transform-origin:left center;-webkit-text-stroke:0.25px #0c0c0c">$0</div>
<div class="t" style="left:561.77px;top:575.50px;font-weight:400;font-size:14px;color:#0c0c0c;transform:scaleX(1.0150);transform-origin:left center;-webkit-text-stroke:0.25px #0c0c0c">$0</div>
<div class="t" style="left:647.12px;top:575.50px;font-weight:400;font-size:14px;color:#0c0c0c;transform:scaleX(1.0150);transform-origin:left center;-webkit-text-stroke:0.25px #0c0c0c">$0</div>
<div class="t" style="left:691.69px;top:575.50px;font-weight:700;font-size:14px;color:#BF5B2A;transform:scaleX(1.0150);transform-origin:left center;-webkit-text-stroke:0.12px #BF5B2A">-$74,804</div>
<div class="t" style="left:757.61px;top:575.50px;font-weight:700;font-size:14px;color:#BF5B2A;transform:scaleX(1.0150);transform-origin:left center;-webkit-text-stroke:0.12px #BF5B2A">-$1,234,541</div>
<div class="t" style="left:862.97px;top:575.50px;font-weight:700;font-size:14px;color:#BF5B2A;transform:scaleX(1.0150);transform-origin:left center;-webkit-text-stroke:0.12px #BF5B2A">-$88,432</div>
<div class="t" style="left:947.96px;top:575.50px;font-weight:700;font-size:14px;color:#BF5B2A;transform:scaleX(1.0150);transform-origin:left center;-webkit-text-stroke:0.12px #BF5B2A">-$20,235</div>
<div class="t" style="left:331.01px;top:616.10px;font-weight:400;font-size:14px;color:#0c0c0c;transform:scaleX(1.0150);transform-origin:left center;-webkit-text-stroke:0.25px #0c0c0c">-$1,025,120</div>
<div class="t" style="left:416.36px;top:616.10px;font-weight:400;font-size:14px;color:#0c0c0c;transform:scaleX(1.0150);transform-origin:left center;-webkit-text-stroke:0.25px #0c0c0c">-$1,280,000</div>
<div class="t" style="left:561.77px;top:616.10px;font-weight:400;font-size:14px;color:#0c0c0c;transform:scaleX(1.0150);transform-origin:left center;-webkit-text-stroke:0.25px #0c0c0c">$0</div>
<div class="t" style="left:647.12px;top:616.10px;font-weight:400;font-size:14px;color:#0c0c0c;transform:scaleX(1.0150);transform-origin:left center;-webkit-text-stroke:0.25px #0c0c0c">$0</div>
<div class="t" style="left:691.91px;top:616.10px;font-weight:400;font-size:14px;color:#0c0c0c;transform:scaleX(1.0150);transform-origin:left center;-webkit-text-stroke:0.25px #0c0c0c">-$74,804</div>
<div class="t" style="left:757.84px;top:616.10px;font-weight:400;font-size:14px;color:#0c0c0c;transform:scaleX(1.0150);transform-origin:left center;-webkit-text-stroke:0.25px #0c0c0c">-$1,234,541</div>
<div class="t" style="left:843.22px;top:616.10px;font-weight:400;font-size:14px;color:#0c0c0c;transform:scaleX(1.0150);transform-origin:left center;-webkit-text-stroke:0.25px #0c0c0c">-$4,282,232</div>
<div class="t" style="left:928.49px;top:616.10px;font-weight:400;font-size:14px;color:#0c0c0c;transform:scaleX(1.0150);transform-origin:left center;-webkit-text-stroke:0.25px #0c0c0c">-$7,220,235</div>
<div class="t" style="left:391.07px;top:636.40px;font-weight:400;font-size:14px;color:#0c0c0c;transform:scaleX(1.0150);transform-origin:left center;-webkit-text-stroke:0.25px #0c0c0c">$0</div>
<div class="t" style="left:476.42px;top:636.40px;font-weight:400;font-size:14px;color:#0c0c0c;transform:scaleX(1.0150);transform-origin:left center;-webkit-text-stroke:0.25px #0c0c0c">$0</div>
<div class="t" style="left:561.77px;top:636.40px;font-weight:400;font-size:14px;color:#0c0c0c;transform:scaleX(1.0150);transform-origin:left center;-webkit-text-stroke:0.25px #0c0c0c">$0</div>
<div class="t" style="left:647.12px;top:636.40px;font-weight:400;font-size:14px;color:#0c0c0c;transform:scaleX(1.0150);transform-origin:left center;-webkit-text-stroke:0.25px #0c0c0c">$0</div>
<div class="t" style="left:691.91px;top:636.40px;font-weight:400;font-size:14px;color:#0c0c0c;transform:scaleX(1.0150);transform-origin:left center;-webkit-text-stroke:0.25px #0c0c0c">-$27,884</div>
<div class="t" style="left:762.66px;top:636.40px;font-weight:400;font-size:14px;color:#0c0c0c;transform:scaleX(1.0150);transform-origin:left center;-webkit-text-stroke:0.25px #0c0c0c">$5,004,755</div>
<div class="t" style="left:860.03px;top:636.40px;font-weight:400;font-size:14px;color:#0c0c0c;transform:scaleX(1.0150);transform-origin:left center;-webkit-text-stroke:0.25px #0c0c0c">$343,258</div>
<div class="t" style="left:953.00px;top:636.40px;font-weight:400;font-size:14px;color:#0c0c0c;transform:scaleX(1.0150);transform-origin:left center;-webkit-text-stroke:0.25px #0c0c0c">$41,720</div>
<div class="t" style="left:331.01px;top:656.70px;font-weight:400;font-size:14px;color:#0c0c0c;transform:scaleX(1.0150);transform-origin:left center;-webkit-text-stroke:0.25px #0c0c0c">-$1,025,120</div>
<div class="t" style="left:416.36px;top:656.70px;font-weight:400;font-size:14px;color:#0c0c0c;transform:scaleX(1.0150);transform-origin:left center;-webkit-text-stroke:0.25px #0c0c0c">-$1,280,000</div>
<div class="t" style="left:561.77px;top:656.70px;font-weight:400;font-size:14px;color:#0c0c0c;transform:scaleX(1.0150);transform-origin:left center;-webkit-text-stroke:0.25px #0c0c0c">$0</div>
<div class="t" style="left:647.12px;top:656.70px;font-weight:400;font-size:14px;color:#0c0c0c;transform:scaleX(1.0150);transform-origin:left center;-webkit-text-stroke:0.25px #0c0c0c">$0</div>
<div class="t" style="left:684.46px;top:656.70px;font-weight:400;font-size:14px;color:#0c0c0c;transform:scaleX(1.0150);transform-origin:left center;-webkit-text-stroke:0.25px #0c0c0c">-$147,243</div>
<div class="t" style="left:762.46px;top:656.70px;font-weight:400;font-size:14px;color:#0c0c0c;transform:scaleX(1.0150);transform-origin:left center;-webkit-text-stroke:0.25px #0c0c0c">$3,775,214</div>
<div class="t" style="left:843.19px;top:656.70px;font-weight:400;font-size:14px;color:#0c0c0c;transform:scaleX(1.0150);transform-origin:left center;-webkit-text-stroke:0.25px #0c0c0c">-$3,843,379</div>
<div class="t" style="left:928.49px;top:656.70px;font-weight:400;font-size:14px;color:#0c0c0c;transform:scaleX(1.0150);transform-origin:left center;-webkit-text-stroke:0.25px #0c0c0c">-$7,128,875</div>
<div class="t" style="left:327.97px;top:677.00px;font-weight:400;font-size:14px;color:#0c0c0c;transform:scaleX(1.0150);transform-origin:left center;-webkit-text-stroke:0.25px #0c0c0c">$21,345,800</div>
<div class="t" style="left:413.32px;top:677.00px;font-weight:400;font-size:14px;color:#0c0c0c;transform:scaleX(1.0150);transform-origin:left center;-webkit-text-stroke:0.25px #0c0c0c">$14,225,800</div>
<div class="t" style="left:498.67px;top:677.00px;font-weight:400;font-size:14px;color:#0c0c0c;transform:scaleX(1.0150);transform-origin:left center;-webkit-text-stroke:0.25px #0c0c0c">$14,225,800</div>
<div class="t" style="left:584.02px;top:677.00px;font-weight:400;font-size:14px;color:#0c0c0c;transform:scaleX(1.0150);transform-origin:left center;-webkit-text-stroke:0.25px #0c0c0c">$14,225,800</div>
<div class="t" style="left:669.44px;top:677.00px;font-weight:400;font-size:14px;color:#0c0c0c;transform:scaleX(1.0150);transform-origin:left center;-webkit-text-stroke:0.25px #0c0c0c">$14,518,103</div>
<div class="t" style="left:754.72px;top:677.00px;font-weight:400;font-size:14px;color:#0c0c0c;transform:scaleX(1.0150);transform-origin:left center;-webkit-text-stroke:0.25px #0c0c0c">$23,243,320</div>
<div class="t" style="left:840.14px;top:677.00px;font-weight:400;font-size:14px;color:#0c0c0c;transform:scaleX(1.0150);transform-origin:left center;-webkit-text-stroke:0.25px #0c0c0c">$14,344,441</div>
<div class="t" style="left:925.49px;top:677.00px;font-weight:400;font-size:14px;color:#0c0c0c;transform:scaleX(1.0150);transform-origin:left center;-webkit-text-stroke:0.25px #0c0c0c">$12,271,023</div>
<div class="t" style="left:391.07px;top:697.30px;font-weight:400;font-size:14px;color:#0c0c0c;transform:scaleX(1.0150);transform-origin:left center;-webkit-text-stroke:0.25px #0c0c0c">$0</div>
<div class="t" style="left:476.42px;top:697.30px;font-weight:400;font-size:14px;color:#0c0c0c;transform:scaleX(1.0150);transform-origin:left center;-webkit-text-stroke:0.25px #0c0c0c">$0</div>
<div class="t" style="left:561.77px;top:697.30px;font-weight:400;font-size:14px;color:#0c0c0c;transform:scaleX(1.0150);transform-origin:left center;-webkit-text-stroke:0.25px #0c0c0c">$0</div>
<div class="t" style="left:647.12px;top:697.30px;font-weight:400;font-size:14px;color:#0c0c0c;transform:scaleX(1.0150);transform-origin:left center;-webkit-text-stroke:0.25px #0c0c0c">$0</div>
<div class="t" style="left:732.47px;top:697.30px;font-weight:400;font-size:14px;color:#0c0c0c;transform:scaleX(1.0150);transform-origin:left center;-webkit-text-stroke:0.25px #0c0c0c">$0</div>
<div class="t" style="left:817.82px;top:697.30px;font-weight:400;font-size:14px;color:#0c0c0c;transform:scaleX(1.0150);transform-origin:left center;-webkit-text-stroke:0.25px #0c0c0c">$0</div>
<div class="t" style="left:903.17px;top:697.30px;font-weight:400;font-size:14px;color:#0c0c0c;transform:scaleX(1.0150);transform-origin:left center;-webkit-text-stroke:0.25px #0c0c0c">$0</div>
<div class="t" style="left:988.52px;top:697.30px;font-weight:400;font-size:14px;color:#0c0c0c;transform:scaleX(1.0150);transform-origin:left center;-webkit-text-stroke:0.25px #0c0c0c">$0</div>
<div class="t" style="left:62.92px;top:1.10px;font-weight:700;font-size:16.4px;color:#fff;transform:scaleX(0.8885);transform-origin:left center;-webkit-text-stroke:0.12px #fff">Expected Quarterly Cash Flow</div>
<div class="t" style="left:137.39px;top:25.80px;font-weight:700;font-size:18px;color:#fff;transform:scaleX(0.9515);transform-origin:left center;-webkit-text-stroke:0.12px #fff">Quarter</div>
<div class="t" style="left:466.68px;top:1.60px;font-weight:700;font-size:14.2px;color:#fff;transform:scaleX(0.9229);transform-origin:left center;-webkit-text-stroke:0.12px #fff">Year One</div>
<div class="t" style="left:808.07px;top:1.60px;font-weight:700;font-size:14.2px;color:#fff;transform:scaleX(0.9288);transform-origin:left center;-webkit-text-stroke:0.12px #fff">Year Two</div>
<div class="t" style="left:361.87px;top:26.00px;font-weight:700;font-size:17.8px;color:#fff;transform:scaleX(1.0000);transform-origin:left center;-webkit-text-stroke:0.12px #fff">1</div>
<div class="t" style="left:447.46px;top:26.00px;font-weight:700;font-size:17.8px;color:#fff;transform:scaleX(1.0000);transform-origin:left center;-webkit-text-stroke:0.12px #fff">2</div>
<div class="t" style="left:532.80px;top:26.00px;font-weight:700;font-size:17.8px;color:#fff;transform:scaleX(1.0000);transform-origin:left center;-webkit-text-stroke:0.12px #fff">3</div>
<div class="t" style="left:617.92px;top:26.00px;font-weight:700;font-size:17.8px;color:#fff;transform:scaleX(1.0000);transform-origin:left center;-webkit-text-stroke:0.12px #fff">4</div>
<div class="t" style="left:703.35px;top:26.00px;font-weight:700;font-size:17.8px;color:#fff;transform:scaleX(1.0000);transform-origin:left center;-webkit-text-stroke:0.12px #fff">5</div>
<div class="t" style="left:788.86px;top:26.00px;font-weight:700;font-size:17.8px;color:#fff;transform:scaleX(1.0000);transform-origin:left center;-webkit-text-stroke:0.12px #fff">2</div>
<div class="t" style="left:874.17px;top:26.00px;font-weight:700;font-size:17.8px;color:#fff;transform:scaleX(1.0000);transform-origin:left center;-webkit-text-stroke:0.12px #fff">7</div>
<div class="t" style="left:959.51px;top:26.00px;font-weight:700;font-size:17.8px;color:#fff;transform:scaleX(1.0000);transform-origin:left center;-webkit-text-stroke:0.12px #fff">8</div>
</body></html>
